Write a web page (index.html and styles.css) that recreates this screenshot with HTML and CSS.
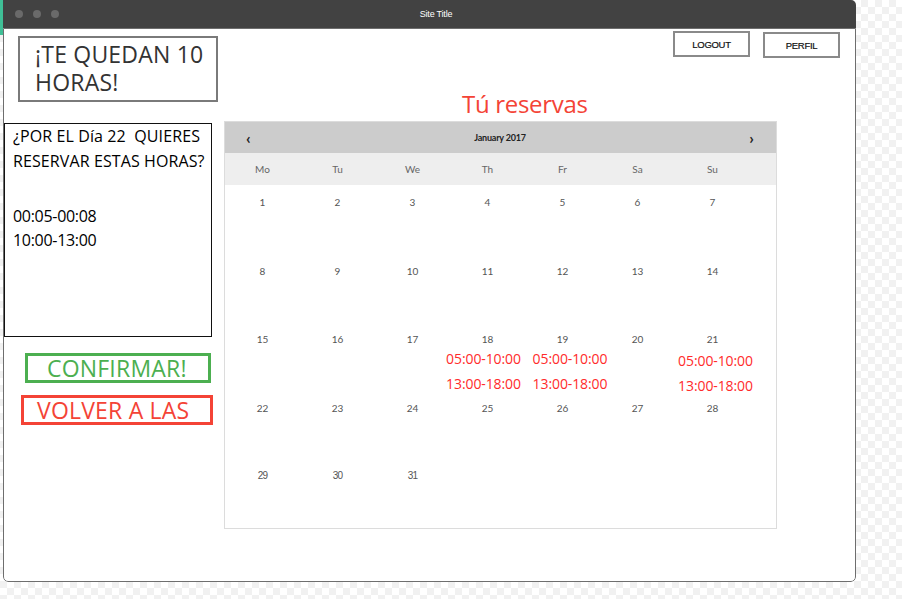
FILE: index.html
```html
<!DOCTYPE html>
<html lang="es">
<head>
<meta charset="utf-8">
<title>Site Title</title>
<link rel="stylesheet" href="styles.css">
</head>
<body>
<div class="edge"></div>
<div class="window">
  <div class="titlebar">
    <div class="dots"><span></span><span></span><span></span></div>
    <div class="site-title">Site Title</div>
  </div>
  <div class="content">
    <aside class="left">
      <div class="hours"><span class="hl">¡TE QUEDAN 10</span><span class="hl">HORAS!</span></div>
      <div class="question">
        <p class="q-text">¿POR EL Día 22&nbsp; QUIERES<br>RESERVAR ESTAS HORAS?</p>
        <p class="q-hours">00:05-00:08<br>10:00-13:00</p>
      </div>
      <div class="btn btn-confirm">CONFIRMAR!</div>
      <div class="btn btn-back">VOLVER A LAS</div>
    </aside>
    <main class="right">
      <div class="topbar">
        <div class="tbtn">LOGOUT</div>
        <div class="tbtn tbtn-2">PERFIL</div>
      </div>
      <h1 class="heading">Tú reservas</h1>
      <div class="calendar">
        <div class="cal-head"><span class="arrow">‹</span><span class="month">January 2017</span><span class="arrow">›</span></div>
        <div class="cal-week">
          <span>Mo</span><span>Tu</span><span>We</span><span>Th</span><span>Fr</span><span>Sa</span><span>Su</span>
        </div>
        <div class="cal-grid">
          <div class="cell">1</div><div class="cell">2</div><div class="cell">3</div><div class="cell">4</div><div class="cell">5</div><div class="cell">6</div><div class="cell">7</div>
          <div class="cell">8</div><div class="cell">9</div><div class="cell">10</div><div class="cell">11</div><div class="cell">12</div><div class="cell">13</div><div class="cell">14</div>
          <div class="cell">15</div><div class="cell">16</div><div class="cell">17</div>
          <div class="cell">18<span class="ev ev-18">05:00-10:00</span><span class="ev ev-18">13:00-18:00</span></div>
          <div class="cell">19<span class="ev ev-19">05:00-10:00</span><span class="ev ev-19">13:00-18:00</span></div>
          <div class="cell">20</div>
          <div class="cell">21<span class="ev ev-21 ev-first">05:00-10:00</span><span class="ev ev-21">13:00-18:00</span></div>
          <div class="cell">22</div><div class="cell">23</div><div class="cell">24</div><div class="cell">25</div><div class="cell">26</div><div class="cell">27</div><div class="cell">28</div>
          <div class="cell last">29</div><div class="cell last">30</div><div class="cell last">31</div>
        </div>
      </div>
    </main>
  </div>
</div>
</body>
</html>
```
FILE: styles.css
```css
* { box-sizing: border-box; }
html, body { margin: 0; padding: 0; }
body {
  width: 902px;
  height: 599px;
  overflow: hidden;
  display: flex;
  align-items: flex-start;
  background-color: #fff;
  background-image: conic-gradient(#f1f1f1 25%, #fff 0 50%, #f1f1f1 0 75%, #fff 0);
  background-size: 14px 14px;
  font-family: "Open Sans", "Noto Sans", sans-serif;
}
.edge {
  width: 3px;
  height: 599px;
  background: linear-gradient(#3fbf96 0 35px, transparent 35px);
}
.window {
  width: 853px;
  height: 582px;
  display: flex;
  flex-direction: column;
  border-radius: 0 5px 5px 5px;
  overflow: hidden;
  background: #fff;
}
.titlebar {
  height: 28px;
  flex: none;
  background: #424242;
  display: flex;
  align-items: center;
}
.dots {
  display: flex;
  gap: 10px;
  padding-left: 12px;
  width: 56px;
}
.dots span {
  width: 8px;
  height: 8px;
  border-radius: 50%;
  background: #6a6a6a;
}
.site-title {
  flex: 1;
  text-align: center;
  padding-right: 43px;
  color: #fff;
  font-family: "Liberation Sans", sans-serif;
  font-size: 9px;
  letter-spacing: -0.2px;
}
.content {
  flex: 1;
  display: flex;
  border: 1px solid #6e6e6e;
  border-radius: 0 0 5px 5px;
}
.left {
  width: 214px;
  flex: none;
  display: flex;
  flex-direction: column;
  align-items: flex-start;
}
.hours {
  margin: 7px 0 0 14px;
  width: 200px;
  height: 66px;
  border: 2px solid #7a7a7a;
  padding: 4px 0 0 15px;
  display: flex;
  flex-direction: column;
  gap: 3px;
  font-size: 23px;
  line-height: 25px;
  color: #333;
  letter-spacing: 0.2px;
  white-space: nowrap;
}
.question {
  margin-top: 21px;
  width: 208px;
  height: 214px;
  border: 1px solid #111;
  padding: 0 0 0 8px;
  font-size: 16px;
  line-height: 24.5px;
  color: #000;
  letter-spacing: 0.1px;
  white-space: nowrap;
}
.question p { margin: 0; }
.q-hours { margin-top: 30.5px !important; letter-spacing: -0.3px; }
.btn {
  height: 30px;
  display: flex;
  align-items: center;
  font-size: 23px;
  letter-spacing: 0.2px;
  line-height: 24px;
  white-space: nowrap;
}
.btn-confirm {
  margin: 16px 0 0 21px;
  width: 186px;
  border: 3px solid #4caf50;
  color: #4caf50;
  padding-left: 19px;
}
.btn-back {
  margin: 12px 0 0 17px;
  width: 192px;
  border: 3px solid #f44336;
  color: #f44336;
  padding-left: 13px;
}
.right {
  flex: 1;
  display: flex;
  flex-direction: column;
}
.topbar {
  display: flex;
  justify-content: flex-end;
  gap: 13px;
  padding: 2px 15px 0 0;
}
.tbtn {
  width: 77px;
  height: 26px;
  border: 2px solid #8a8a8a;
  display: flex;
  align-items: center;
  justify-content: center;
  font-family: "Liberation Sans", sans-serif;
  font-size: 9.5px;
  color: #111;
  letter-spacing: -0.3px;
  -webkit-text-stroke: 0.2px #111;
}
.tbtn-2 { margin-top: 1px; }
.heading {
  margin: 32px 0 0 244px;
  font-weight: normal;
  font-size: 24px;
  line-height: 28px;
  color: #f44336;
  letter-spacing: -0.3px;
}
.calendar {
  margin: 3px 0 0 6px;
  width: 553px;
  height: 408px;
  border: 1px solid #dcdcdc;
  font-family: Lato, "Open Sans", sans-serif;
}
.cal-head {
  height: 31px;
  background: #cccccc;
  display: flex;
  align-items: center;
  justify-content: space-between;
  padding: 0 22px 0 21px;
  color: #222;
}
.arrow {
  font-size: 16px;
  font-weight: bold;
  line-height: 16px;
}
.month {
  font-size: 9px;
  font-weight: bold;
  letter-spacing: -0.2px;
}
.cal-week {
  height: 32px;
  background: #eeeeee;
  display: grid;
  grid-template-columns: repeat(7, 75px);
  align-items: center;
  font-size: 10px;
  color: #666;
}
.cal-week span, .cell { text-align: center; }
.cal-grid {
  display: grid;
  grid-template-columns: repeat(7, 75px);
  grid-auto-rows: 68.6px;
}
.cell {
  padding-top: 11px;
  font-size: 10px;
  line-height: 12px;
  color: #555;
  display: flex;
  flex-direction: column;
  align-items: center;
}
.cell.last {
  font-family: "Liberation Sans", sans-serif;
  letter-spacing: -0.8px;
}
.ev {
  font-family: "Open Sans", sans-serif;
  font-size: 14px;
  line-height: 25px;
  color: #ff2b2b;
  white-space: nowrap;
  letter-spacing: -0.1px;
}
.ev-18 { margin-left: -8px; }
.ev-19 { margin-left: 15px; }
.ev-21 { margin-left: 6px; }
.ev-first { margin-top: 3px; }
.ev-21 + .ev-21 { margin-top: 0; }
.cell > .ev-18:nth-child(1), .cell > .ev-19:nth-child(1) { margin-top: 1px; }
```
